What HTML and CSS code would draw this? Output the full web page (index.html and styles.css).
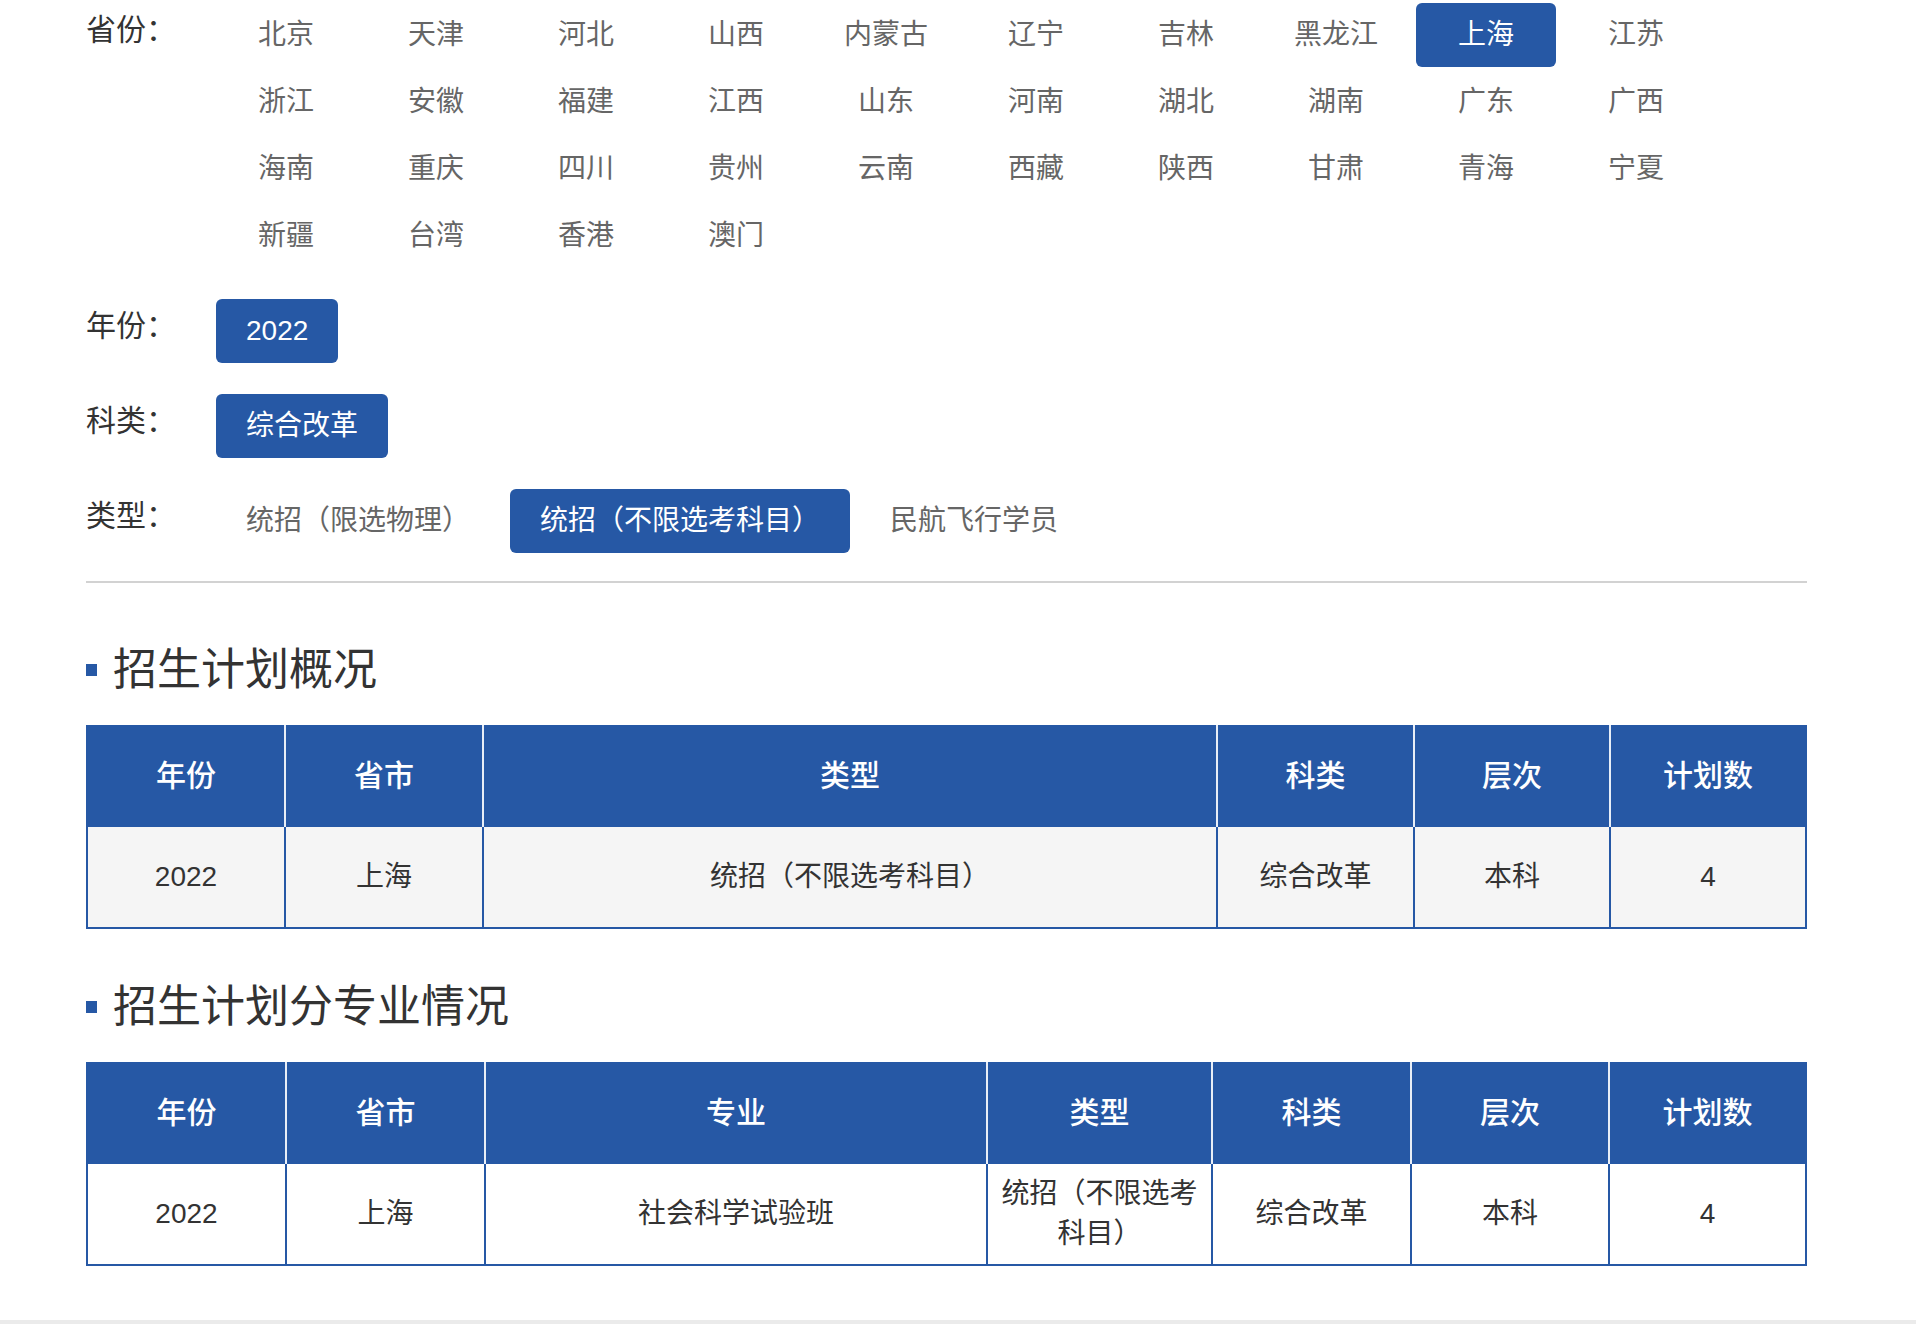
FILE: index.html
```html
<!DOCTYPE html>
<html lang="zh-CN">
<head>
    <meta charset="UTF-8">
    <meta name="viewport" content="width=device-width, initial-scale=1.0">
    <title>招生计划</title>
    <link rel="stylesheet" href="styles.css">
</head>
<body>
    <div class="page">
        <div class="filters">
            <div class="filter-row">
                <div class="filter-label">省份：</div>
                <ul class="options provinces">
                    <li>北京</li><li>天津</li><li>河北</li><li>山西</li><li>内蒙古</li>
                    <li>辽宁</li><li>吉林</li><li>黑龙江</li><li class="active">上海</li><li>江苏</li>
                    <li>浙江</li><li>安徽</li><li>福建</li><li>江西</li><li>山东</li>
                    <li>河南</li><li>湖北</li><li>湖南</li><li>广东</li><li>广西</li>
                    <li>海南</li><li>重庆</li><li>四川</li><li>贵州</li><li>云南</li>
                    <li>西藏</li><li>陕西</li><li>甘肃</li><li>青海</li><li>宁夏</li>
                    <li>新疆</li><li>台湾</li><li>香港</li><li>澳门</li>
                </ul>
            </div>
            <div class="filter-row">
                <div class="filter-label">年份：</div>
                <ul class="options">
                    <li class="active">2022</li>
                </ul>
            </div>
            <div class="filter-row">
                <div class="filter-label">科类：</div>
                <ul class="options">
                    <li class="active">综合改革</li>
                </ul>
            </div>
            <div class="filter-row">
                <div class="filter-label">类型：</div>
                <ul class="options">
                    <li>统招（限选物理）</li>
                    <li class="active">统招（不限选考科目）</li>
                    <li>民航飞行学员</li>
                </ul>
            </div>
        </div>

        <h2 class="section-title">招生计划概况</h2>
        <table class="plan-table summary">
            <colgroup>
                <col class="w-198"><col class="w-198"><col class="w-734">
                <col class="w-197"><col class="w-196"><col class="w-194">
            </colgroup>
            <thead>
                <tr><th>年份</th><th>省市</th><th>类型</th><th>科类</th><th>层次</th><th>计划数</th></tr>
            </thead>
            <tbody>
                <tr><td>2022</td><td>上海</td><td>统招（不限选考科目）</td><td>综合改革</td><td>本科</td><td>4</td></tr>
            </tbody>
        </table>

        <h2 class="section-title">招生计划分专业情况</h2>
        <table class="plan-table detail">
            <colgroup>
                <col class="w-199"><col class="w-199"><col class="w-502"><col class="w-225">
                <col class="w-199"><col class="w-198"><col class="w-195">
            </colgroup>
            <thead>
                <tr><th>年份</th><th>省市</th><th>专业</th><th>类型</th><th>科类</th><th>层次</th><th>计划数</th></tr>
            </thead>
            <tbody>
                <tr><td>2022</td><td>上海</td><td>社会科学试验班</td><td>统招（不限选考科目）</td><td>综合改革</td><td>本科</td><td>4</td></tr>
            </tbody>
        </table>
    </div>
    <div class="footer"></div>
</body>
</html>
```

FILE: styles.css
```css
body {
    margin: 0;
    font-family: "Liberation Sans", "Noto Sans CJK SC", sans-serif;
    color: #333;
    background: #fff;
}
ul {
    list-style: none;
    margin: 0;
    padding: 0;
}
.page {
    width: 1721px;
    padding: 3px 0 0 86px;
}
.filters {
    padding-bottom: 28px;
    border-bottom: 2px solid #d2d2d2;
}
.filter-row {
    display: flex;
    align-items: flex-start;
    margin-bottom: 31px;
}
.filter-row:last-child {
    margin-bottom: 0;
}
.filter-label {
    width: 130px;
    flex-shrink: 0;
    font-size: 30px;
    line-height: 54px;
    color: #333;
    white-space: nowrap;
}
.options {
    display: flex;
    flex-wrap: wrap;
}
.options li {
    height: 64px;
    line-height: 64px;
    padding: 0 30px;
    margin-right: 10px;
    font-size: 28px;
    color: #666;
    border-radius: 6px;
    white-space: nowrap;
    cursor: pointer;
}
.options li.active {
    background: #2658a5;
    color: #fff;
}
.provinces {
    display: grid;
    grid-template-columns: repeat(10, 140px);
    column-gap: 10px;
    row-gap: 3px;
}
.provinces li {
    padding: 0;
    margin: 0;
    text-align: center;
}
.section-title {
    display: flex;
    align-items: center;
    margin: 57px 0 25px;
    font-size: 44px;
    line-height: 60px;
    font-weight: normal;
    color: #333;
}
.section-title::before {
    content: "";
    width: 11px;
    height: 12px;
    margin-right: 16px;
    background: #2658a5;
}
.plan-table + .section-title {
    margin-top: 48px;
}
.plan-table {
    width: 1721px;
    table-layout: fixed;
    border-collapse: separate;
    border-spacing: 0;
    border: 2px solid #2658a5;
    border-top: 0;
    text-align: center;
}
.plan-table th {
    height: 95px;
    padding: 0 0 7px;
    background: #2658a5;
    color: #fff;
    font-size: 30px;
    font-weight: 500;
    border-right: 2px solid #e8eef7;
}
.plan-table td {
    height: 100px;
    padding: 0 10px;
    font-size: 28px;
    line-height: 40px;
    color: #333;
    border-right: 2px solid #2658a5;
}
.plan-table th:last-child,
.plan-table td:last-child {
    border-right: 0;
}
.summary td {
    background: #f5f5f5;
}
.detail td {
    background: #fff;
}
.w-194 { width: 194px; }
.w-195 { width: 195px; }
.w-196 { width: 196px; }
.w-197 { width: 197px; }
.w-198 { width: 198px; }
.w-199 { width: 199px; }
.w-225 { width: 225px; }
.w-502 { width: 502px; }
.w-734 { width: 734px; }
.footer {
    margin-top: 54px;
    height: 60px;
    background: #ebebeb;
}
```
